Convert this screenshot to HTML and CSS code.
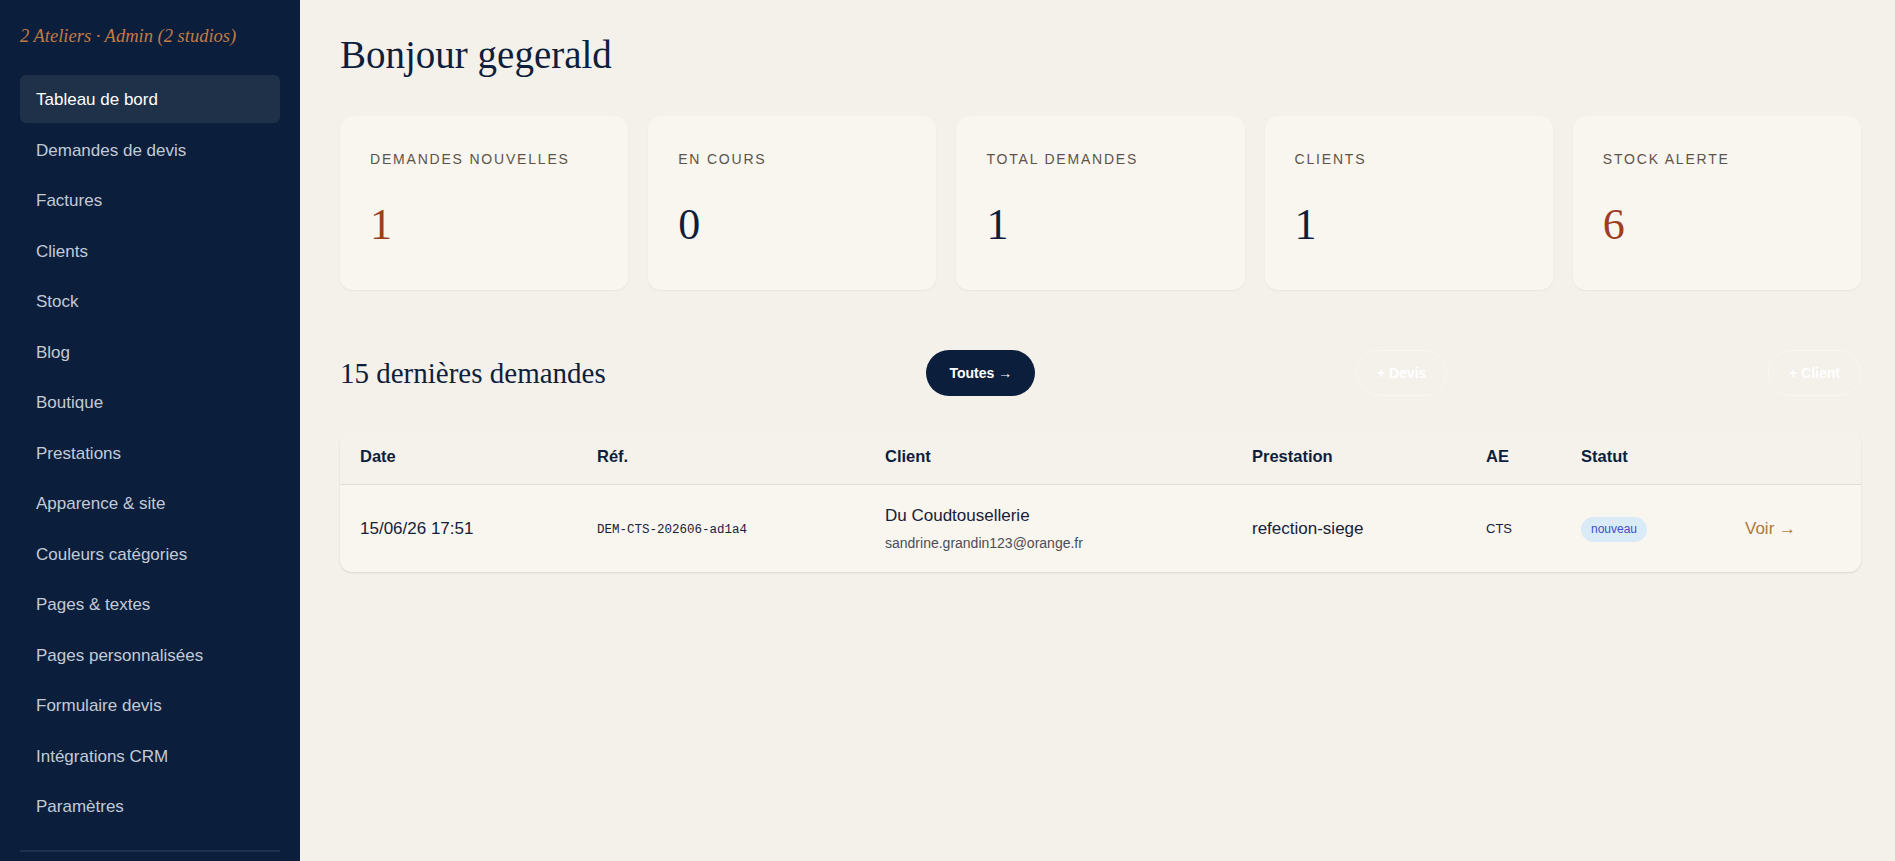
FILE: index.html
```html
<!DOCTYPE html>
<html lang="fr">
<head>
    <meta charset="UTF-8">
    <meta name="viewport" content="width=device-width, initial-scale=1.0">
    <title>Tableau de bord</title>
    <link rel="stylesheet" href="styles.css">
</head>
<body>
    <aside class="sidebar">
        <div class="brand">2 Ateliers · Admin (2 studios)</div>
        <nav class="nav">
            <a href="#" class="nav-item active">Tableau de bord</a>
            <a href="#" class="nav-item">Demandes de devis</a>
            <a href="#" class="nav-item">Factures</a>
            <a href="#" class="nav-item">Clients</a>
            <a href="#" class="nav-item">Stock</a>
            <a href="#" class="nav-item">Blog</a>
            <a href="#" class="nav-item">Boutique</a>
            <a href="#" class="nav-item">Prestations</a>
            <a href="#" class="nav-item">Apparence &amp; site</a>
            <a href="#" class="nav-item">Couleurs catégories</a>
            <a href="#" class="nav-item">Pages &amp; textes</a>
            <a href="#" class="nav-item">Pages personnalisées</a>
            <a href="#" class="nav-item">Formulaire devis</a>
            <a href="#" class="nav-item">Intégrations CRM</a>
            <a href="#" class="nav-item">Paramètres</a>
        </nav>
        <div class="sidebar-sep"></div>
    </aside>

    <main class="main">
        <h1 class="page-title">Bonjour gegerald</h1>

        <div class="stats">
            <div class="stat-card">
                <div class="stat-label">Demandes nouvelles</div>
                <div class="stat-value accent">1</div>
            </div>
            <div class="stat-card">
                <div class="stat-label">En cours</div>
                <div class="stat-value">0</div>
            </div>
            <div class="stat-card">
                <div class="stat-label">Total demandes</div>
                <div class="stat-value">1</div>
            </div>
            <div class="stat-card">
                <div class="stat-label">Clients</div>
                <div class="stat-value">1</div>
            </div>
            <div class="stat-card">
                <div class="stat-label">Stock alerte</div>
                <div class="stat-value accent">6</div>
            </div>
        </div>

        <div class="section-head">
            <h2 class="section-title">15 dernières demandes</h2>
            <a href="#" class="btn btn-dark">Toutes →</a>
            <a href="#" class="btn btn-ghost">+ Devis</a>
            <a href="#" class="btn btn-ghost">+ Client</a>
        </div>

        <div class="table-wrap">
            <table class="requests">
                <colgroup>
                    <col class="c-date">
                    <col class="c-ref">
                    <col class="c-client">
                    <col class="c-presta">
                    <col class="c-ae">
                    <col class="c-status">
                    <col class="c-action">
                </colgroup>
                <thead>
                    <tr>
                        <th>Date</th>
                        <th>Réf.</th>
                        <th>Client</th>
                        <th>Prestation</th>
                        <th>AE</th>
                        <th>Statut</th>
                        <th></th>
                    </tr>
                </thead>
                <tbody>
                    <tr>
                        <td>15/06/26 17:51</td>
                        <td class="ref">DEM-CTS-202606-ad1a4</td>
                        <td>
                            <div class="client-name">Du Coudtousellerie</div>
                            <div class="client-mail">sandrine.grandin123@orange.fr</div>
                        </td>
                        <td>refection-siege</td>
                        <td class="ae">CTS</td>
                        <td><span class="badge">nouveau</span></td>
                        <td><a href="#" class="row-link">Voir →</a></td>
                    </tr>
                </tbody>
            </table>
        </div>
    </main>
</body>
</html>
```

FILE: styles.css
```css
* {
    box-sizing: border-box;
}
body {
    margin: 0;
    display: flex;
    min-height: 100vh;
    font-family: "Liberation Sans", Arial, sans-serif;
    background: #f4f0ea;
    color: #14213a;
}
a {
    text-decoration: none;
}

/* sidebar */
.sidebar {
    width: 300px;
    flex-shrink: 0;
    height: 100vh;
    background: #0b1f3d;
    padding: 24px 20px 0;
    overflow: hidden;
}
.brand {
    font-family: "Liberation Serif", Georgia, serif;
    font-style: italic;
    font-size: 18.5px;
    line-height: 24px;
    color: #c27a45;
    margin-bottom: 27px;
}
.nav {
    display: flex;
    flex-direction: column;
    gap: 2.5px;
}
.nav-item {
    display: block;
    padding: 13px 16px 11px;
    font-size: 17px;
    line-height: 24px;
    color: #c3cad5;
    border-radius: 6px;
}
.nav-item.active {
    background: #1f3049;
    color: #fff;
}
.sidebar-sep {
    margin-top: 20px;
    height: 2px;
    background: #1d3150;
}

/* main */
.main {
    flex: 1;
    padding: 31px 34px 40px 40px;
}
.page-title {
    margin: 0 0 38px;
    font-family: "Liberation Serif", Georgia, serif;
    font-weight: 400;
    font-size: 39px;
    line-height: 47px;
    color: #0d1f3c;
}
.stats {
    display: grid;
    grid-template-columns: repeat(5, 1fr);
    gap: 20px;
}
.stat-card {
    background: #f9f5ef;
    border-radius: 13px;
    padding: 33px 30px 43px;
    box-shadow: 0 1px 2px rgba(60, 40, 20, 0.05);
}
.stat-label {
    font-size: 14px;
    line-height: 20px;
    letter-spacing: 1.8px;
    text-transform: uppercase;
    color: #5c544a;
}
.stat-value {
    margin-top: 34px;
    font-family: "Liberation Serif", Georgia, serif;
    font-size: 44px;
    line-height: 44px;
    color: #0d1f3c;
}
.stat-value.accent {
    color: #9c3f1f;
}

.section-head {
    display: flex;
    align-items: center;
    justify-content: space-between;
    margin: 60px 0 36px;
    height: 46px;
}
.section-title {
    margin: 0;
    font-family: "Liberation Serif", Georgia, serif;
    font-weight: 400;
    font-size: 29px;
    line-height: 34px;
    color: #0d1f3c;
}
.btn {
    display: inline-block;
    height: 46px;
    line-height: 44px;
    padding: 0 22px;
    border-radius: 23px;
    font-size: 14px;
    font-weight: 700;
    border: 1px solid transparent;
}
.btn-dark {
    background: #0b1f3d;
    color: #fff;
}
.btn-ghost {
    color: #fff;
    border-color: rgba(255, 255, 255, 0.4);
    padding: 0 20px;
}

/* requests table */
.table-wrap {
    background: #f9f5ef;
    border-radius: 12px;
    overflow: hidden;
    box-shadow: 0 1px 2px rgba(60, 40, 20, 0.12);
}
.requests {
    width: 100%;
    border-collapse: collapse;
    table-layout: fixed;
}
.c-date { width: 237px; }
.c-ref { width: 288px; }
.c-client { width: 367px; }
.c-presta { width: 234px; }
.c-ae { width: 95px; }
.c-status { width: 164px; }
.requests th {
    text-align: left;
    background: #f5f1eb;
    padding: 14px 20px 18px;
    font-size: 16.5px;
    line-height: 20px;
    font-weight: 700;
    color: #0d1f3c;
    border-bottom: 1px solid #e0dbd3;
}
.requests td {
    padding: 19px 20px;
    font-size: 17px;
    line-height: 24px;
    color: #16213a;
    vertical-align: middle;
}
.requests td.ref {
    font-family: "Liberation Mono", "Courier New", monospace;
    font-size: 12.5px;
    padding-top: 22px;
}
.client-mail {
    margin-top: 5px;
    font-size: 14px;
    line-height: 20px;
    color: #4a4d5a;
}
.requests td.ae {
    font-size: 13px;
}
.badge {
    display: inline-block;
    padding: 3px 10px;
    border-radius: 13px;
    background: #daebf8;
    color: #3b4fc4;
    font-size: 12px;
    line-height: 19px;
}
.row-link {
    color: #b07a3c;
}
```
